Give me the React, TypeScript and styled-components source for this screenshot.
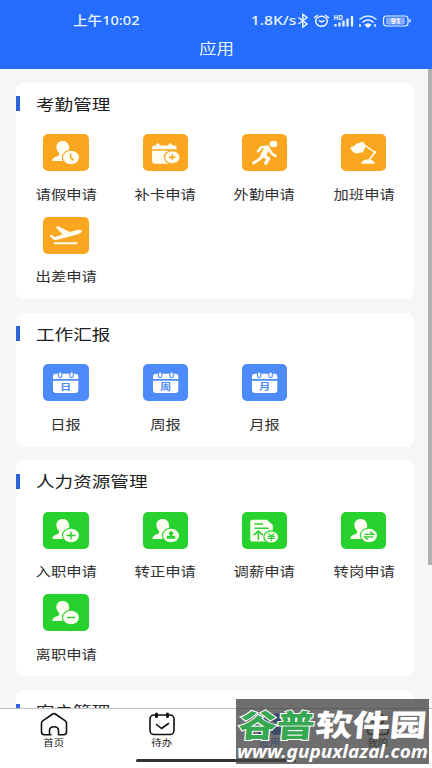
import React from 'react';
import styled, { createGlobalStyle } from 'styled-components';

const Global = createGlobalStyle`
  * { box-sizing: border-box; }
  body { margin: 0; background: #fff; font-family: "Noto Sans", "Noto Sans CJK SC", sans-serif; }
`;

const Screen = styled.div`
  position: relative;
  width: 432px;
  height: 768px;
  display: flex;
  flex-direction: column;
  overflow: hidden;
  background: #f6f6f6;
`;
const Header = styled.header`
  height: 69px;
  flex: none;
  background: #256dff;
  color: #eaf6ff;
`;
const StatusBar = styled.div`
  height: 38px;
  padding: 3px 20px 0 73px;
  display: flex;
  align-items: center;
  justify-content: space-between;
`;
const StatusRight = styled.div`
  display: flex;
  align-items: center;
`;
const Wide = styled.span<{ $size: number; $scale: number; $origin?: string; $weight?: number }>`
  display: inline-block;
  font-size: ${(p) => p.$size}px;
  font-weight: ${(p) => p.$weight ?? 400};
  line-height: 1.2;
  white-space: nowrap;
  transform: scaleX(${(p) => p.$scale});
  transform-origin: ${(p) => p.$origin ?? 'center'};
`;
const PageTitle = styled.div`
  height: 22px;
  display: flex;
  align-items: center;
  justify-content: center;
`;
const Body = styled.main`
  flex: 1;
  min-height: 0;
  display: flex;
  justify-content: space-between;
`;
const Sections = styled.div`
  width: 398px;
  margin-left: 16px;
  padding-top: 14px;
  display: flex;
  flex-direction: column;
  gap: 13.8px;
  overflow: hidden;
`;
const Scrollbar = styled.div`
  width: 4px;
  height: 496px;
  background: #b1b1b1;
`;
const Card = styled.section`
  flex: none;
  background: #fff;
  border-radius: 8px;
`;
const CardTitle = styled.h2`
  margin: 0;
  height: 51.3px;
  padding-bottom: 9.4px;
  display: flex;
  align-items: center;
  gap: 16.6px;
  font-weight: 400;
  color: #202020;
  &::before {
    content: '';
    width: 3.6px;
    height: 15px;
    background: #2c63dc;
  }
`;
const Grid = styled.div`
  display: grid;
  grid-template-columns: repeat(4, 99.3px);
  grid-auto-rows: 82.4px;
  padding-left: 0.3px;
`;
const Item = styled.div`
  display: flex;
  flex-direction: column;
  align-items: center;
  gap: 15.7px;
  color: #303030;
`;
const Tile = styled.svg`
  width: 45.3px;
  height: 37px;
  border-radius: 5px;
  flex: none;
  background: ${(p) => p.color};
`;
const TabBar = styled.nav`
  flex: none;
  height: 60px;
  padding-top: 3px;
  border-top: 1px solid #c4c4c4;
  background: #fff;
  display: grid;
  grid-template-columns: repeat(4, 1fr);
`;
const Tab = styled.div<{ $active?: boolean }>`
  display: flex;
  flex-direction: column;
  align-items: center;
  gap: 2px;
  color: ${(p) => (p.$active ? '#2468f2' : '#111')};
`;
const TabIcon = styled.svg`
  width: 28px;
  height: 24px;
  fill: none;
  stroke: currentColor;
  stroke-width: 1.6;
  stroke-linecap: round;
  stroke-linejoin: round;
`;
const HomeIndicator = styled.div`
  position: absolute;
  left: 136px;
  top: 759px;
  width: 160px;
  height: 3px;
  border-radius: 2px;
  background: #333;
`;
const Watermark = styled.div`
  position: absolute;
  left: 236px;
  top: 699px;
  width: 193px;
  height: 65px;
  background: rgba(65, 65, 65, 0.76);
  color: #fff;
`;
const WatermarkArt = styled.svg`
  display: block;
  width: 100%;
  height: 100%;
  overflow: visible;
  font-family: "Noto Sans CJK SC", sans-serif;
  font-weight: 900;
`;

const ORANGE = '#faa61f';
const BLUE = '#4e8bfa';
const GREEN = '#27d22f';

const Person = () => (
  <path
    fill="#fffdf0"
    d="M19.7 7c-4 0-6.300 2.700-6.300 6.200 0 2.600 1.200 4.300 2.700 5.500.5 2.200-.6 2.900-2.700 3.800-2.800 1.200-4 1.900-4 4.500h14L26 17.500c.2-1.300.2-2.800.1-4.300C25.800 9.400 23.500 7 19.700 7z"
  />
);
const Badge = ({ bg, children }: { bg: string; children?: React.ReactNode }) => (
  <>
    <ellipse cx="28" cy="23.500" rx="9.100" ry="7.800" fill={bg} />
    <ellipse cx="28" cy="23.500" rx="8" ry="6.700" fill="#fffdf0" />
    <g stroke={bg} strokeWidth="1.500" fill="none">{children}</g>
  </>
);
const Calendar = ({ mark }: { mark: string }) => (
  <g>
    <path fill="#fff" d="M10 15v-2.500q0-2.800 3-2.800h19.300q3 0 3 2.800V15zM10 16.700h25.300V26q0 3-3 3H13q-3 0-3-3z" />
    {[17, 28.4].map((x) => (
      <rect key={x} x={x - 1.5} y="8" width="3.400" height="5.600" rx="1.600" fill="#fff" stroke={BLUE} strokeWidth="1.100" />
    ))}
    <text x="18.830" y="26.500" transform="scale(1.2 1)" textAnchor="middle" fontSize="9.300" fontWeight="700" fill={BLUE} fontFamily="Noto Sans CJK SC, sans-serif">
      {mark}
    </text>
  </g>
);

const glyphs: Record<string, React.ReactNode> = {
  leave: <><Person /><Badge bg={ORANGE}><path d="M27.700 19.500v4.700l3 1.800" /></Badge></>,
  card: (
    <>
      <path fill="#fffdf0" d="M9 15.200v-1.500q0-2.200 2.500-2.200h1.300q.3-2.300 2-2.300t2 2.300h8.500q.3-2.300 2-2.300t2 2.300h1.900q2.500 0 2.500 2.200v1.500zM9 16.700h24.700V29.700H12q-3 0-3-3z" />
      <ellipse cx="29.300" cy="23.300" rx="8.500" ry="7.300" fill={ORANGE} />
      <ellipse cx="29.300" cy="23.300" rx="7.200" ry="6" fill="#fffdf0" />
      <path d="M26 23.300h6.600M29.300 20.500v5.600" stroke={ORANGE} strokeWidth="1.500" />
    </>
  ),
  run: (
    <g fill="none" stroke="#fffdf0" strokeWidth="2.600" strokeLinecap="round" strokeLinejoin="round">
      <ellipse cx="31.500" cy="10" rx="3.900" ry="3.300" fill="#fffdf0" stroke="none" />
      <path d="M16 17.300l3.500-4.100 6-.4M27.500 15.500l2.200 4.200 3.900 2.300" />
      <path d="M19.800 22.500l-2 2.500-6.300 4" strokeWidth="3" />
      <path d="M25 14.500l-3.500 6.300" strokeWidth="5.600" />
      <path d="M22.500 22.500l4 2-2.700 4.500" strokeWidth="3.600" />
    </g>
  ),
  lamp: (
    <g fill="#fffdf0">
      <path d="M9.700 13q3.500-.3 5.500-3 2-1.800 3.600-.8 1.600-2.200 3.600-1 1.800 1 1.400 3l.5 3-1.500 1.600-.5 2.600-3.300 0q-3.400 1.800-5.300.4-2.500-.3-2.600-2.600l-1.400-.6z" />
      <path d="M22.500 10.300l11.500 8-6 8" fill="none" stroke="#fffdf0" strokeWidth="1.500" />
      <circle cx="34" cy="18.300" r="1.200" />
      <path d="M20 29.700q1.200-4.300 7-4.300t7 4.300z" />
    </g>
  ),
  plane: (
    <g fill="#fffdf0">
      <path d="M6.300 18.300l2.200-.5 3 2.100 8.100-2.300-7-7.600 2.500-.7 11.600 5.700 7.500-1.900q3.800-.8 4.900 1.100-.7 1.900-4 3l-18.700 5q-4.300 1.200-6.300.3z" />
      <rect x="10.600" y="25.300" width="24" height="2" rx="1" />
    </g>
  ),
  day: <Calendar mark="日" />,
  week: <Calendar mark="周" />,
  month: <Calendar mark="月" />,
  join: <><Person /><Badge bg={GREEN}><path d="M23.500 23.500h9M28 19.700v7.600" /></Badge></>,
  regular: (
    <>
      <Person />
      <Badge bg={GREEN}>
        <ellipse cx="28" cy="21.200" rx="2.100" ry="1.900" fill={GREEN} stroke="none" />
        <path d="M27 22h2v1.800h3.200v3h-8.400v-3H27z" fill={GREEN} stroke="none" />
      </Badge>
    </>
  ),
  salary: (
    <>
      <path fill="#fffdf0" d="M8.300 9.500q0-1.800 2-1.800h14.500l6 5.300v16.600H10.300q-2 0-2-1.800z" />
      <path d="M12.500 12h8.500M12.500 16.200h14M16.300 28v-8M11.500 23.300l4.800-4.200 4.800 4.200" fill="none" stroke={GREEN} strokeWidth="1.500" />
      <ellipse cx="29.300" cy="25" rx="8" ry="6.800" fill={GREEN} />
      <ellipse cx="29.300" cy="25" rx="6.800" ry="5.500" fill="#fffdf0" />
      <path d="M26.500 21.500l2.800 2.700 2.800-2.700M25.700 24.400h7.200M25.700 26.500h7.200M29.300 24v5" fill="none" stroke={GREEN} strokeWidth="1.100" />
    </>
  ),
  transfer: <><Person /><Badge bg={GREEN}><path d="M23.500 22.400h9l-3.400-2.700M32.500 24.800h-9l3.400 2.700" strokeWidth="1.300" /></Badge></>,
  resign: <><Person /><Badge bg={GREEN}><path d="M24 23.500h8" /></Badge></>,
};

const sections = [
  { title: '考勤管理', color: ORANGE, items: [['leave', '请假申请'], ['card', '补卡申请'], ['run', '外勤申请'], ['lamp', '加班申请'], ['plane', '出差申请']] },
  { title: '工作汇报', color: BLUE, items: [['day', '日报'], ['week', '周报'], ['month', '月报']] },
  { title: '人力资源管理', color: GREEN, items: [['join', '入职申请'], ['regular', '转正申请'], ['salary', '调薪申请'], ['transfer', '转岗申请'], ['resign', '离职申请']] },
  { title: '客户管理', color: BLUE, items: [] },
];

const tabs = [
  { label: '首页', icon: <path d="M11 22.700H4.500Q1.500 22.700 1.500 20V11Q1.500 9.700 2.700 8.900L12.700 2Q14 1.200 15.300 2L25.300 8.900Q26.500 9.700 26.500 11V20Q26.500 22.700 23.500 22.700H18.500V18.500Q18.500 14.800 14 14.800T9.500 18.500V22.700Z" /> },
  { label: '待办', icon: <><rect x="2" y="3" width="24" height="19.500" rx="4" /><path d="M8.500 2v2.500M19.500 2v2.500" strokeWidth="3" /><path d="M8.500 12.500l5 4 7-5" /></> },
  { label: '应用', active: true, icon: <g fill="currentColor"><rect x="3" y="2" width="9" height="8" rx="2" /><circle cx="20.500" cy="6" r="4" /><rect x="3" y="14" width="9" height="8" rx="2" /><rect x="16" y="14" width="9" height="8" rx="2" /></g> },
  { label: '我的', icon: <><ellipse cx="14" cy="7" rx="6" ry="5.500" /><path d="M3.500 19q0-5 7-5h7q7 0 7 5 0 3.500-5 3.500h-11q-5 0-5-3.500z" /></> },
];

const StatusIcons = () => (
  <svg width="116" height="16" viewBox="296 12.500 116 16" fill="none" stroke="#eaf6ff" strokeWidth="1.500">
    <path d="M298.500 17l8.500 6.500-4.200 3V14l4.200 3-8.500 6.500" />
    <ellipse cx="321.500" cy="20.800" rx="5.800" ry="5" />
    <path d="M314 17.300l4-2.800M329 17.300l-4-2.800M319 19.800l2.500 1.600 3-1.400" />
    <text x="333.500" y="19" fontSize="6.200" fontWeight="700" textLength="9.500" lengthAdjust="spacingAndGlyphs" fill="#eaf6ff" stroke="none">HD</text>
    <path d="M335.500 23.500v2.500M339.500 22v4M343.500 20v6M347.500 18v8M352 15.500V26" strokeWidth="2.300" />
    <path d="M359.500 19q8.500-7 17 0M362.500 21.800q5.500-4.500 11 0M360 23.500v3M375 23.500v3" />
    <path d="M365.500 24.500q2.500-2 5 0l-2.500 2z" fill="#eaf6ff" />
    <rect x="383.500" y="15.500" width="24.500" height="10" rx="3" strokeWidth="1.200" />
    <rect x="386" y="17" width="19" height="7" rx="1" fill="#86acff" stroke="none" />
    <path d="M410 18.800v3" strokeWidth="1.500" />
    <text x="391" y="23.700" fontSize="8" fontWeight="700" textLength="9.500" lengthAdjust="spacingAndGlyphs" fill="#fff" stroke="none">91</text>
  </svg>
);

export default function App() {
  return (
    <>
      <Global />
      <Screen>
        <Header>
          <StatusBar>
            <Wide $size={12.8} $scale={1.14} $origin="left" $weight={500}>上午10:02</Wide>
            <StatusRight>
              <Wide $size={12.8} $scale={1.22} $origin="right" $weight={500}>1.8K/s</Wide>
              <StatusIcons />
            </StatusRight>
          </StatusBar>
          <PageTitle><Wide $size={14.5} $scale={1.21}>应用</Wide></PageTitle>
        </Header>
        <Body>
          <Sections>
            {sections.map((s) => (
              <Card key={s.title}>
                <CardTitle><Wide $size={15.3} $scale={1.215} $origin="left">{s.title}</Wide></CardTitle>
                <Grid>
                  {s.items.map(([icon, label]) => (
                    <Item key={label}>
                      <Tile color={s.color} viewBox="0 0 45.3 37">{glyphs[icon]}</Tile>
                      <Wide $size={12.6} $scale={1.215}>{label}</Wide>
                    </Item>
                  ))}
                </Grid>
              </Card>
            ))}
          </Sections>
          <Scrollbar />
        </Body>
        <TabBar>
          {tabs.map((t) => (
            <Tab key={t.label} $active={t.active}>
              <TabIcon viewBox="0 0 28 24">{t.icon}</TabIcon>
              <Wide $size={8.7} $scale={1.2}>{t.label}</Wide>
            </Tab>
          ))}
        </TabBar>
        <HomeIndicator />
        <Watermark>
          <WatermarkArt viewBox="0 0 193 65">
            <g transform="skewX(-5)">
              <text x="5" y="38" fontSize="31" textLength="76" lengthAdjust="spacingAndGlyphs" fill="#36a852" stroke="#fff" strokeWidth="2" paintOrder="stroke">谷普</text>
              <text x="82" y="37.500" fontSize="30" textLength="111" lengthAdjust="spacingAndGlyphs" fill="#fff">软件园</text>
            </g>
            <text x="1" y="59" fontSize="18.500" fontFamily="'Noto Sans', 'Open Sans', sans-serif" fontStyle="italic" fontWeight="700" textLength="191" lengthAdjust="spacingAndGlyphs" fill="#fff">www.gupuxlazal.com</text>
          </WatermarkArt>
        </Watermark>
      </Screen>
    </>
  );
}
